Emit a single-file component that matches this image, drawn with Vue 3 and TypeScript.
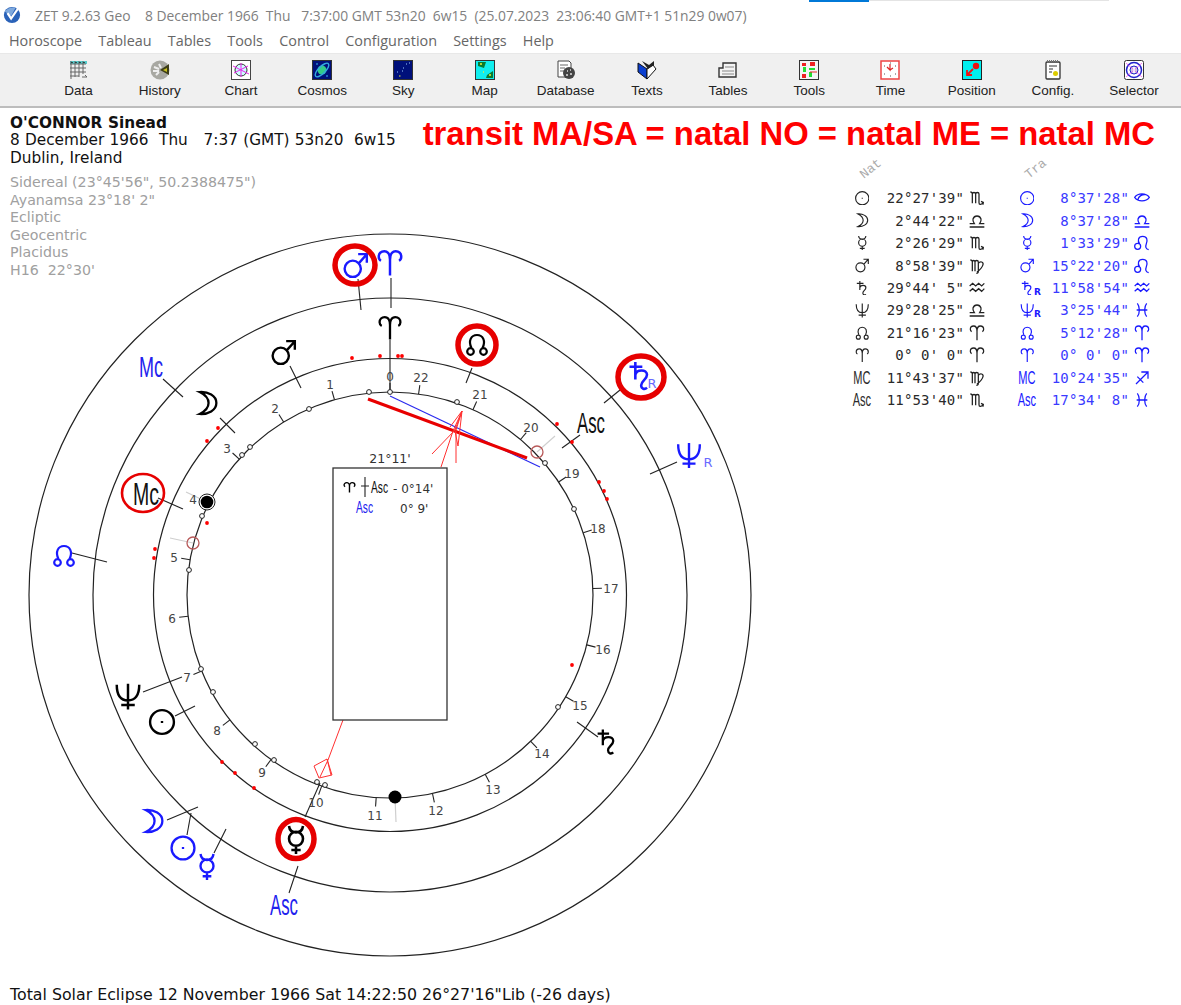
<script setup lang="ts">
type GlyphName =
  | 'sun' | 'moon' | 'mercury' | 'mars' | 'saturn' | 'neptune' | 'node' | 'aries'
  | 'scorpio' | 'libra' | 'virgo' | 'aquarius' | 'pisces' | 'leo' | 'sagittarius' | 'eye'

const glyphs: Record<GlyphName, string> = {
  sun: 'M1 12a11 11 0 1 0 22 0a11 11 0 1 0-22 0M12 11v2',
  moon: 'M5 1.5C13 1 21 5 21 12C21 19 13 23 5 22.5C10 20 13.5 16.5 13.5 12C13.5 7.5 10 4 5 1.5Z',
  mercury: 'M12 17a6 6 0 1 0 0-12a6 6 0 1 0 0 12M6 0C6.5 4 9 5.5 12 5.5C15 5.5 17.5 4 18 0M12 17V24M8 20.5H16',
  mars: 'M9 23a7.5 7.5 0 1 0 0-15a7.5 7.5 0 1 0 0 15M14.5 10.5L22 2M14 2H22V10',
  saturn: 'M3 4H14M8 0V15M8 11C9 6 18 6 18 11C18 15 13 16 13 20C13 23 16 24 18 22',
  neptune: 'M2 2C2 12 6 16 12 16C18 16 22 12 22 2M12 1V24M6 20H18',
  node: 'M6.5 15C3 8 6 2 12 2C18 2 21 8 17.5 15M2.2 18.5a3.3 3.3 0 1 0 6.6 0a3.3 3.3 0 1 0-6.6 0M15.2 18.5a3.3 3.3 0 1 0 6.6 0a3.3 3.3 0 1 0-6.6 0',
  aries: 'M12 23V9C12 3 9 1.5 7 1.5C4 1.5 2 3.5 2 6.5C2 8 3 9.5 4 10M12 9C12 3 15 1.5 17 1.5C20 1.5 22 3.5 22 6.5C22 8 21 9.5 20 10',
  scorpio: 'M2 3C4 3 5 4 5 6V20M5 6C5 3 10 3 10 6V20M10 6C10 3 15 3 15 6V19C15 22 18 23 21 19M18 17L21.5 18.5L21 22',
  libra: 'M1 21H23M1 16H8C6 13 5.5 11 6 9C7 6 9 4.5 12 4.5C15 4.5 17 6 18 9C18.5 11 18 13 16 16H23',
  virgo: 'M2 3C4 3 5 4 5 6V20M5 6C5 3 9 3 9 6V20M9 6C9 3 14 3 14 6V20C14 22 13 23 11 23M14 8C17 4 22 6 21 10C20 14 16 18 12 21',
  aquarius: 'M1 9L5.5 5L10 9L14.5 5L19 9L23 5M1 17L5.5 13L10 17L14.5 13L19 17L23 13',
  pisces: 'M5 2C9 7 9 17 5 22M19 2C15 7 15 17 19 22M4 12H20',
  leo: 'M10 17a4.5 4.5 0 1 0-9 0a4.5 4.5 0 1 0 9 0M8.5 13.5C5 9 6 2 13 2C20 2 20.5 8 18.5 13C17 17 17 21 22 22',
  sagittarius: 'M3 21L21 3M11 3H21V13M5 10L14 19',
  eye: 'M1 11C6 4 18 4 23 11C18 18 6 18 1 11ZM6 15C6 9 13 6 18 7',
}

interface PositionRow {
  natalGlyph?: GlyphName
  natalText?: string
  natal: string
  natalSign: GlyphName
  transitGlyph?: GlyphName
  transitText?: string
  transitRetro?: boolean
  transit: string
  transitSign: GlyphName
}

const rows: PositionRow[] = [
  { natalGlyph: 'sun', natal: `22°27'39"`, natalSign: 'scorpio', transitGlyph: 'sun', transit: `8°37'28"`, transitSign: 'eye' },
  { natalGlyph: 'moon', natal: `2°44'22"`, natalSign: 'libra', transitGlyph: 'moon', transit: `8°37'28"`, transitSign: 'libra' },
  { natalGlyph: 'mercury', natal: `2°26'29"`, natalSign: 'scorpio', transitGlyph: 'mercury', transit: `1°33'29"`, transitSign: 'leo' },
  { natalGlyph: 'mars', natal: `8°58'39"`, natalSign: 'virgo', transitGlyph: 'mars', transit: `15°22'20"`, transitSign: 'leo' },
  { natalGlyph: 'saturn', natal: `29°44' 5"`, natalSign: 'aquarius', transitGlyph: 'saturn', transitRetro: true, transit: `11°58'54"`, transitSign: 'aquarius' },
  { natalGlyph: 'neptune', natal: `29°28'25"`, natalSign: 'libra', transitGlyph: 'neptune', transitRetro: true, transit: `3°25'44"`, transitSign: 'pisces' },
  { natalGlyph: 'node', natal: `21°16'23"`, natalSign: 'aries', transitGlyph: 'node', transit: `5°12'28"`, transitSign: 'aries' },
  { natalGlyph: 'aries', natal: `0° 0' 0"`, natalSign: 'aries', transitGlyph: 'aries', transit: `0° 0' 0"`, transitSign: 'aries' },
  { natalText: 'MC', natal: `11°43'37"`, natalSign: 'virgo', transitText: 'MC', transit: `10°24'35"`, transitSign: 'sagittarius' },
  { natalText: 'Asc', natal: `11°53'40"`, natalSign: 'scorpio', transitText: 'Asc', transit: `17°34' 8"`, transitSign: 'pisces' },
]

const tools = [
  'Data', 'History', 'Chart', 'Cosmos', 'Sky', 'Map', 'Database',
  'Texts', 'Tables', 'Tools', 'Time', 'Position', 'Config.', 'Selector',
]
const menus = ['Horoscope', 'Tableau', 'Tables', 'Tools', 'Control', 'Configuration', 'Settings', 'Help']

// kept in script: the template compiler would collapse the double spaces
const titleText = 'ZET 9.2.63 Geo    8 December 1966  Thu   7:37:00 GMT 53n20  6w15  (25.07.2023  23:06:40 GMT+1 51n29 0w07)'
const birthLine = '8 December 1966  Thu   7:37 (GMT) 53n20  6w15'
const houseSystem = `H16  22°30'`

// chart centre and ring radii, in page pixels (the svg viewBox starts at y 108)
const cx = 390
const cy = 595
const rings = [361, 297, 236.5, 203]

// house numbers sit just outside the inner ring, each with a short tick
const houses: [string, number, number][] = [
  ['0', 390, 376], ['22', 421, 377], ['21', 480, 394], ['20', 531, 427], ['19', 572, 473],
  ['18', 598, 528], ['17', 611, 588], ['16', 603, 649], ['15', 580, 705], ['14', 542, 753],
  ['13', 493, 789], ['12', 436, 810], ['11', 375, 815], ['10', 316, 802], ['9', 262, 772],
  ['8', 217, 730], ['7', 187, 677], ['6', 172, 618], ['5', 174, 557], ['4', 193, 499],
  ['3', 227, 448], ['2', 275, 408], ['1', 330, 384],
]

const houseTicks = houses.map(([label, x, y]) => {
  const a = Math.atan2(y - cy, x - cx)
  return {
    label, x, y,
    x1: cx + 203 * Math.cos(a), y1: cy + 203 * Math.sin(a),
    x2: cx + 212 * Math.cos(a), y2: cy + 212 * Math.sin(a),
  }
})

const openDots: [number, number][] = [
  [369, 392], [390, 392], [457, 402], [545, 463], [574, 509], [558, 707], [309, 409], [250, 447],
  [242, 455], [202, 516], [189, 570], [201, 669], [213, 692], [255, 744], [274, 760], [317, 782], [325, 785],
]

const redDots: [number, number][] = [
  [352, 358], [380, 356], [398, 356], [402, 356], [218, 428], [207, 441], [207, 523], [155, 549], [154, 558],
  [222, 762], [235, 773], [254, 788], [557, 424], [572, 442], [599, 482], [604, 491], [607, 499], [572, 665],
]

// planet leader lines crossing the middle rings
const leaders: [number, number, number, number][] = [
  [390, 340, 390, 392], [290, 366, 301, 388], [220, 418, 235, 433], [158, 498, 183, 509], [143, 692, 182, 677],
  [175, 716, 195, 706], [305, 817, 320, 783], [472, 368, 466, 383], [580, 435, 562, 448], [577, 722, 598, 737],
  [358, 279, 361, 310], [391, 278, 391, 308], [163, 379, 183, 397], [72, 553, 107, 562], [167, 820, 198, 807],
  [187, 835, 191, 813], [214, 853, 226, 829], [289, 893, 298, 866], [620, 390, 604, 403], [677, 462, 650, 474],
]

interface ChartGlyph {
  name: GlyphName
  x: number
  y: number
  size: number
  tone: 'black' | 'blue'
}

const chartGlyphs: ChartGlyph[] = [
  { name: 'aries', x: 390, y: 328, size: 25, tone: 'black' },
  { name: 'mars', x: 284, y: 352, size: 26, tone: 'black' },
  { name: 'moon', x: 207, y: 403, size: 25, tone: 'black' },
  { name: 'node', x: 477, y: 345, size: 24, tone: 'black' },
  { name: 'neptune', x: 128, y: 696, size: 27, tone: 'black' },
  { name: 'sun', x: 162, y: 722, size: 26, tone: 'black' },
  { name: 'mercury', x: 296, y: 840, size: 28, tone: 'black' },
  { name: 'saturn', x: 607, y: 742, size: 25, tone: 'black' },
  { name: 'mars', x: 356, y: 265, size: 26, tone: 'blue' },
  { name: 'aries', x: 390, y: 263, size: 27, tone: 'blue' },
  { name: 'node', x: 64, y: 556, size: 24, tone: 'blue' },
  { name: 'moon', x: 153, y: 821, size: 25, tone: 'blue' },
  { name: 'sun', x: 183, y: 848, size: 25, tone: 'blue' },
  { name: 'mercury', x: 207, y: 867, size: 26, tone: 'blue' },
  { name: 'saturn', x: 640, y: 376, size: 28, tone: 'blue' },
  { name: 'neptune', x: 689, y: 455, size: 26, tone: 'blue' },
]

const chartLabels = [
  { text: 'Mc', x: 151, y: 377, w: 24, size: 30, tone: 'blue' },
  { text: 'Mc', x: 146, y: 505, w: 26, size: 32, tone: 'black' },
  { text: 'Asc', x: 591, y: 433, w: 28, size: 30, tone: 'black' },
  { text: 'Asc', x: 284, y: 915, w: 28, size: 29, tone: 'blue' },
]

function place(g: ChartGlyph) {
  const k = g.size / 24
  return `translate(${g.x - g.size / 2} ${g.y - g.size / 2}) scale(${k})`
}
</script>

<template>
  <div class="window">
    <div class="taskbar-edge"><span class="taskbar-active"></span></div>

    <header class="titlebar">
      <svg class="app-logo" viewBox="0 0 20 20">
        <circle cx="10" cy="10" r="9" fill="#2a62b8" />
        <path d="M2 6C5 2 10 1 14 2L9 11Z" fill="#7fa9dd" />
        <path d="M5 8L9 14L18 1" fill="none" stroke="#fff" stroke-width="2.4" />
      </svg>
      <span class="title-text">{{ titleText }}</span>
    </header>

    <nav class="menubar">
      <span v-for="m in menus" :key="m">{{ m }}</span>
    </nav>

    <div class="toolbar">
      <div v-for="t in tools" :key="t" class="tool">
        <svg class="tool-icon" viewBox="0 0 20 20">
          <template v-if="t === 'Data'">
            <path d="M1 1H18V4H1Z" fill="#5cc" />
            <path d="M1 4H17M1 8H17M1 12H17M1 16H10M2 1V19M6 1V17M10 1V17M14 1V14M13 17H18L16 15" fill="none" stroke="#666" stroke-width="1" />
            <path d="M3 2V3M7 2V3M11 2V3M15 2V3" stroke="#222" stroke-width="1.5" />
          </template>
          <template v-else-if="t === 'History'">
            <circle cx="10" cy="10" r="9.5" fill="#a8a8a2" />
            <path d="M4 7L9 9M3 11L9 11M6 15L9 12M9 4L11 8" stroke="#eee" stroke-width="2" />
            <path d="M10 10L19 4L19 15Z" fill="#3e3e18" />
            <path d="M13 10L17 8L17 12Z" fill="#c8c020" />
          </template>
          <template v-else-if="t === 'Chart'">
            <rect x="0.5" y="0.5" width="19" height="19" fill="#fff" stroke="#444" />
            <circle cx="10" cy="10" r="6" fill="#cff" stroke="#333" />
            <path d="M2 6L18 14M3 13L17 6M10 3V17" stroke="#e2e" stroke-width="1" />
          </template>
          <template v-else-if="t === 'Cosmos'">
            <rect x="0.5" y="0.5" width="19" height="19" fill="#00107a" stroke="#333" />
            <circle cx="10" cy="10" r="4.5" fill="#3c8" />
            <ellipse cx="10" cy="10" rx="9" ry="3.5" fill="none" stroke="#3ad" stroke-width="1.4" transform="rotate(-45 10 10)" />
            <circle cx="5" cy="4" r="0.8" fill="#4cf" /><circle cx="15" cy="16" r="0.8" fill="#4cf" />
          </template>
          <template v-else-if="t === 'Sky'">
            <rect x="0.5" y="0.5" width="19" height="19" fill="#00107a" stroke="#333" />
            <path d="M13 4h1M16 3h1M10 8h1M9 11h1M4 12h1" stroke="#9cf" stroke-width="1.2" />
            <path d="M6 16h1.5" stroke="#ee4" stroke-width="1.2" />
          </template>
          <template v-else-if="t === 'Map'">
            <rect x="0.5" y="0.5" width="19" height="19" fill="#1ee" stroke="#333" />
            <path d="M3 2H11L9 8L3 6ZM12 15L18 11V18H11Z" fill="#0a7a30" />
            <path d="M5 4h2M14 15h2M8 12h1" stroke="#ee3" stroke-width="1.5" />
          </template>
          <template v-else-if="t === 'Database'">
            <path d="M2 1H13L15 3V17H2Z" fill="#fff" stroke="#444" />
            <path d="M4 5H12M4 8H9M4 11H8" stroke="#666" />
            <circle cx="13" cy="13" r="6" fill="#444" />
            <path d="M11 11h1M14 10h1M10 15h2M14 14h2" stroke="#ddd" stroke-width="1.4" />
          </template>
          <template v-else-if="t === 'Texts'">
            <path d="M1 3L10 9V19L1 12Z" fill="#0b3fd0" stroke="#111" />
            <path d="M10 9L16 5L19 9L10 19Z" fill="#fff" stroke="#111" />
            <path d="M5 1L12 5L17 1V5L11 9" fill="#222" />
          </template>
          <template v-else-if="t === 'Tables'">
            <path d="M1 8H5V3H18V17H1Z" fill="#f4f4f4" stroke="#333" stroke-width="1.4" />
            <path d="M7 7H16M4 11H16M4 14H16" stroke="#888" />
          </template>
          <template v-else-if="t === 'Tools'">
            <rect x="0.5" y="0.5" width="19" height="19" fill="#f4f4f4" stroke="#333" />
            <path d="M3 3H7V6H3ZM11 2H16V6H11ZM3 14H7V18H3Z" fill="#e22" />
            <path d="M4 7H7V12H4ZM10 8H16V10H10ZM10 12H13V17H10Z" fill="#2d3" />
            <path d="M11 12H18" stroke="#e22" />
          </template>
          <template v-else-if="t === 'Time'">
            <rect x="1" y="1" width="18" height="18" fill="#fff" stroke="#e44" stroke-width="1.5" />
            <path d="M10 4V10L7 7M10 10L13 8" fill="none" stroke="#d22" stroke-width="1.2" />
            <path d="M10 3h1M4 6h1M15 6h1M4 14h1M15 14h1M10 16h1" stroke="#555" />
          </template>
          <template v-else-if="t === 'Position'">
            <rect x="0.5" y="0.5" width="19" height="19" fill="#0ee" stroke="#222" />
            <circle cx="14" cy="6" r="3.2" fill="#e11" />
            <path d="M11 9L5 15M5 10V15H10" fill="none" stroke="#e11" stroke-width="1.8" />
          </template>
          <template v-else-if="t === 'Config.'">
            <rect x="3" y="2" width="14" height="17" rx="1" fill="#fff" stroke="#333" stroke-width="1.3" />
            <path d="M4 1H16" stroke="#777" stroke-width="2" stroke-dasharray="1 1" />
            <path d="M6 6H14M6 9H10M6 12H9" stroke="#333" />
            <circle cx="12.5" cy="13.5" r="2.5" fill="#dc0" />
          </template>
          <template v-else>
            <rect x="0.5" y="0.5" width="19" height="19" rx="2" fill="#fff" stroke="#333" />
            <circle cx="10" cy="10" r="7.5" fill="none" stroke="#22c" stroke-width="1.5" />
            <circle cx="10" cy="10" r="4" fill="#ccd" stroke="#22c" />
            <path d="M2 3L18 17M18 3L2 17" stroke="#e2e" stroke-width="0.6" />
            <path d="M10 7V13" stroke="#fff" stroke-width="1.5" />
          </template>
        </svg>
        <span class="tool-label">{{ t }}</span>
      </div>
    </div>

    <main class="workspace">
      <section class="birth-info">
        <div class="birth-head">
          <strong>O'CONNOR Sinead</strong>
          <div>{{ birthLine }}</div>
          <div>Dublin, Ireland</div>
        </div>
        <div class="birth-meta">
          <div>Sidereal (23°45'56", 50.2388475")</div>
          <div>Ayanamsa 23°18' 2"</div>
          <div>Ecliptic</div>
          <div>Geocentric</div>
          <div>Placidus</div>
          <div>{{ houseSystem }}</div>
        </div>
      </section>

      <h1 class="headline">transit MA/SA = natal NO = natal ME = natal MC</h1>

      <svg class="chart" viewBox="0 108 845 875" width="845" height="875">
        <circle v-for="r in rings" :key="r" :cx="cx" :cy="cy" :r="r" class="ring" />

        <line v-for="(l, i) in leaders" :key="i" :x1="l[0]" :y1="l[1]" :x2="l[2]" :y2="l[3]" class="tick" />

        <line x1="537" y1="452" x2="555" y2="436" class="faint" />
        <line x1="193" y1="543" x2="170" y2="538" class="faint" />
        <line x1="207" y1="502" x2="186" y2="492" class="faint" />
        <line x1="395" y1="797" x2="396" y2="822" class="faint" />

        <g v-for="h in houseTicks" :key="h.label">
          <line :x1="h.x1" :y1="h.y1" :x2="h.x2" :y2="h.y2" class="tick" />
          <text :x="h.x" :y="h.y + 4.5" class="house">{{ h.label }}</text>
        </g>

        <circle v-for="(d, i) in openDots" :key="i" :cx="d[0]" :cy="d[1]" r="2.4" class="open-dot" />
        <circle v-for="(d, i) in redDots" :key="i" :cx="d[0]" :cy="d[1]" r="1.9" class="red-dot" />

        <circle cx="207" cy="502" r="8" class="thin-ring" />
        <circle cx="207" cy="502" r="6.3" class="solid" />
        <circle cx="395" cy="797" r="6.5" class="solid" />
        <circle cx="193" cy="543" r="6" class="hollow-red" />
        <circle cx="537" cy="452" r="6" class="hollow-red" />

        <g v-for="(g, i) in chartGlyphs" :key="i" :transform="place(g)" :class="['chart-glyph', g.tone]">
          <path :d="glyphs[g.name]" />
        </g>

        <text
          v-for="(l, i) in chartLabels" :key="i"
          :x="l.x" :y="l.y" :font-size="l.size" :textLength="l.w" lengthAdjust="spacingAndGlyphs"
          text-anchor="middle" :class="['chart-label', l.tone]"
        >{{ l.text }}</text>

        <text x="652" y="388" class="retro">R</text>
        <text x="708" y="467" class="retro">R</text>

        <ellipse cx="355" cy="265" rx="20" ry="19" class="mark" />
        <ellipse cx="477" cy="345" rx="19" ry="19" class="mark" />
        <ellipse cx="641" cy="377" rx="23" ry="21" class="mark" />
        <ellipse cx="296" cy="839" rx="18" ry="19.5" class="mark" />
        <ellipse cx="143" cy="493" rx="21" ry="19" class="mark-thin" />

        <line x1="390" y1="396" x2="540" y2="467" class="midpoint-blue" />
        <line x1="368" y1="399" x2="527" y2="458" class="midpoint-red" />
        <path
          d="M462 411L455 430L432 454M462 411L453 431L441 467M462 411L456 430V463M462 411L450 427M455 431L458 446L462 411"
          class="arrow"
        />
        <path d="M343 720L328 760M314 766L327 759L332 775L319 778ZM328 760L320 777M327 759L331 775" class="arrow" />

        <text x="390" y="463" class="box-title">21°11'</text>
        <rect x="333" y="468" width="114" height="252" class="box" />
        <g transform="translate(343 482) scale(.54 .46)" class="chart-glyph black thin"><path :d="glyphs.aries" /></g>
        <path d="M365 477V497M361 486H369" class="tick" />
        <text transform="translate(371 493) scale(.6 1)" class="box-asc black">Asc</text>
        <text x="393" y="493" class="box-text">- 0°14'</text>
        <text transform="translate(356 513) scale(.6 1)" class="box-asc blue">Asc</text>
        <text x="400" y="513" class="box-text">0° 9'</text>
      </svg>

      <section class="positions">
        <div class="pos-heads"><span>Nat</span><span>Tra</span></div>
        <div v-for="(r, i) in rows" :key="i" class="pos-row">
          <span class="pos-body">
            <span v-if="r.natalText" class="narrow">{{ r.natalText }}</span>
            <svg v-else class="pos-glyph" viewBox="0 0 24 24"><path :d="glyphs[r.natalGlyph!]" /></svg>
          </span>
          <span class="pos-deg">{{ r.natal }}</span>
          <svg class="pos-sign" viewBox="0 0 24 24"><path :d="glyphs[r.natalSign]" /></svg>
          <span class="pos-body transit">
            <span v-if="r.transitText" class="narrow">{{ r.transitText }}</span>
            <svg v-else class="pos-glyph" viewBox="0 0 24 24"><path :d="glyphs[r.transitGlyph!]" /></svg>
            <sub v-if="r.transitRetro" class="pos-retro">R</sub>
          </span>
          <span class="pos-deg transit">{{ r.transit }}</span>
          <svg class="pos-sign transit" viewBox="0 0 24 24"><path :d="glyphs[r.transitSign]" /></svg>
        </div>
      </section>
    </main>

    <footer class="status">Total Solar Eclipse 12 November 1966 Sat 14:22:50 26°27'16"Lib (-26 days)</footer>
  </div>
</template>

<style>
html, body { background: #fff; }
</style>

<style scoped>
.window {
  width: 1181px;
  height: 1005px;
  overflow: hidden;
  background: #fff;
  display: flex;
  flex-direction: column;
}

.taskbar-edge {
  height: 1px;
  margin-left: 869px;
  width: 240px;
  background: #e4e4e4;
  position: relative;
  flex: none;
}
.taskbar-active {
  position: absolute;
  left: -60px;
  top: 0;
  width: 60px;
  height: 2px;
  background: #0078d7;
}

.titlebar {
  height: 28px;
  flex: none;
  display: flex;
  align-items: center;
  padding-left: 3px;
  gap: 14px;
  font: 13.85px "Open Sans", sans-serif;
  color: #808080;
  white-space: pre;
}
.app-logo { width: 18px; height: 18px; flex: none; }

.menubar {
  height: 23px;
  flex: none;
  display: flex;
  align-items: center;
  gap: 16.2px;
  padding-left: 9px;
  font: 14.4px "Open Sans", sans-serif;
  color: #666;
}

.toolbar {
  box-sizing: border-box;
  height: 55px;
  flex: none;
  margin-top: 1px;
  padding-left: 38px;
  display: flex;
  background: #f0f0f0;
  border-top: 1px solid #e8e8e8;
  border-bottom: 2px solid #bdbdbd;
}
.tool {
  width: 81.2px;
  flex: none;
  display: flex;
  flex-direction: column;
  align-items: center;
  padding-top: 6px;
  gap: 2px;
}
.tool-icon { width: 20px; height: 20px; }
.tool-label { font: 13.5px "Liberation Sans", sans-serif; color: #222; line-height: 18px; }

.workspace {
  flex: 1;
  display: grid;
  grid-template-columns: 845px 336px;
  grid-template-rows: 45px 1fr;
  min-height: 0;
}

.birth-info {
  grid-column: 1;
  grid-row: 1 / 3;
  z-index: 1;
  padding: 6.5px 0 0 10px;
  font: 15.3px/17.5px "DejaVu Sans", sans-serif;
  white-space: pre;
  pointer-events: none;
}
.birth-head { color: #111; word-spacing: 0.4px; }
.birth-meta { margin-top: 7px; color: #a0a0a0; font-size: 14.2px; }

.headline {
  grid-column: 1 / 3;
  grid-row: 1;
  z-index: 1;
  justify-self: end;
  margin: 7px 26px 0 0;
  font: bold 32.8px "Liberation Sans", sans-serif;
  color: #f00;
  white-space: nowrap;
}

.chart {
  grid-column: 1;
  grid-row: 1 / 3;
  display: block;
}
.ring { fill: none; stroke: #222; stroke-width: 1.2; }
.tick { stroke: #222; stroke-width: 1.1; fill: none; }
.faint { stroke: #cfcfcf; stroke-width: 1.2; }
.house {
  font: 12px "DejaVu Sans", sans-serif;
  fill: #444;
  text-anchor: middle;
}
.open-dot { fill: #fff; stroke: #222; stroke-width: 1; }
.red-dot { fill: #f00; }
.solid { fill: #000; }
.thin-ring { fill: #fff; stroke: #222; stroke-width: 1; }
.hollow-red { fill: none; stroke: #b85a5a; stroke-width: 1.3; }
.chart-glyph path { fill: none; stroke-width: 2.2; }
.chart-glyph.thin path { stroke-width: 2.6; }
.chart-glyph.black path { stroke: #000; }
.chart-glyph.blue path { stroke: #1a1aff; }
.chart-label { font-family: "Liberation Sans", sans-serif; }
.chart-label.black { fill: #111; }
.chart-label.blue { fill: #2222ee; }
.box-asc { font: 17px "Liberation Sans", sans-serif; }
.box-asc.black { fill: #111; }
.box-asc.blue { fill: #2222ee; }
.retro { font: 13px "DejaVu Sans", sans-serif; fill: #6a6aff; text-anchor: middle; }
.mark { fill: none; stroke: #e60000; stroke-width: 5.5; }
.mark-thin { fill: none; stroke: #e60000; stroke-width: 2.6; }
.midpoint-blue { stroke: #2a2aee; stroke-width: 1.2; }
.midpoint-red { stroke: #e80000; stroke-width: 3; }
.arrow { fill: none; stroke: #ff3030; stroke-width: 1; }
.box { fill: #fff; stroke: #333; stroke-width: 1.3; }
.box-title { font: 12.5px "DejaVu Sans", sans-serif; fill: #333; text-anchor: middle; }
.box-text { font: 12px "DejaVu Sans", sans-serif; fill: #333; }

.positions {
  grid-column: 2;
  grid-row: 2;
  padding-left: 6px;
  font: 14px "DejaVu Sans Mono", monospace;
  color: #2a2a2a;
}
.pos-heads {
  height: 34px;
  display: flex;
  color: #aaa;
  font: 13px "Liberation Mono", monospace;
}
.pos-heads span {
  box-sizing: border-box;
  width: 166px;
  padding: 10px 0 0 9px;
  transform: rotate(-38deg);
  transform-origin: 18px 18px;
}
.pos-row {
  display: grid;
  grid-template-columns: 22px 91px 26px 48px 91px 26px;
  height: 22.45px;
  align-items: center;
}
.pos-body { display: flex; align-items: center; justify-content: center; height: 100%; position: relative; }
.pos-body.transit { margin-left: 26px; color: #1a1aff; }
.pos-deg { text-align: right; white-space: pre; letter-spacing: 0.15px; }
.pos-deg.transit { color: #3a3aff; }
.pos-glyph { width: 14.5px; height: 14.5px; flex: none; }
.pos-glyph path, .pos-sign path { fill: none; stroke: #222; stroke-width: 1.9; }
.pos-sign { width: 16px; height: 16px; margin-left: 5px; }
.transit .pos-glyph path, .pos-sign.transit path { stroke: #1a1aff; }
.pos-retro {
  font: bold 9px "DejaVu Sans", sans-serif;
  position: absolute;
  left: 18px;
  top: 10px;
}
.narrow {
  display: inline-block;
  flex: none;
  font: 19px "Liberation Sans", sans-serif;
  transform: scaleX(0.58);
}

.status {
  box-sizing: border-box;
  height: 22px;
  flex: none;
  padding: 3px 0 0 10px;
  font: 15.8px/18px "DejaVu Sans", sans-serif;
  color: #111;
  white-space: pre;
}
</style>
